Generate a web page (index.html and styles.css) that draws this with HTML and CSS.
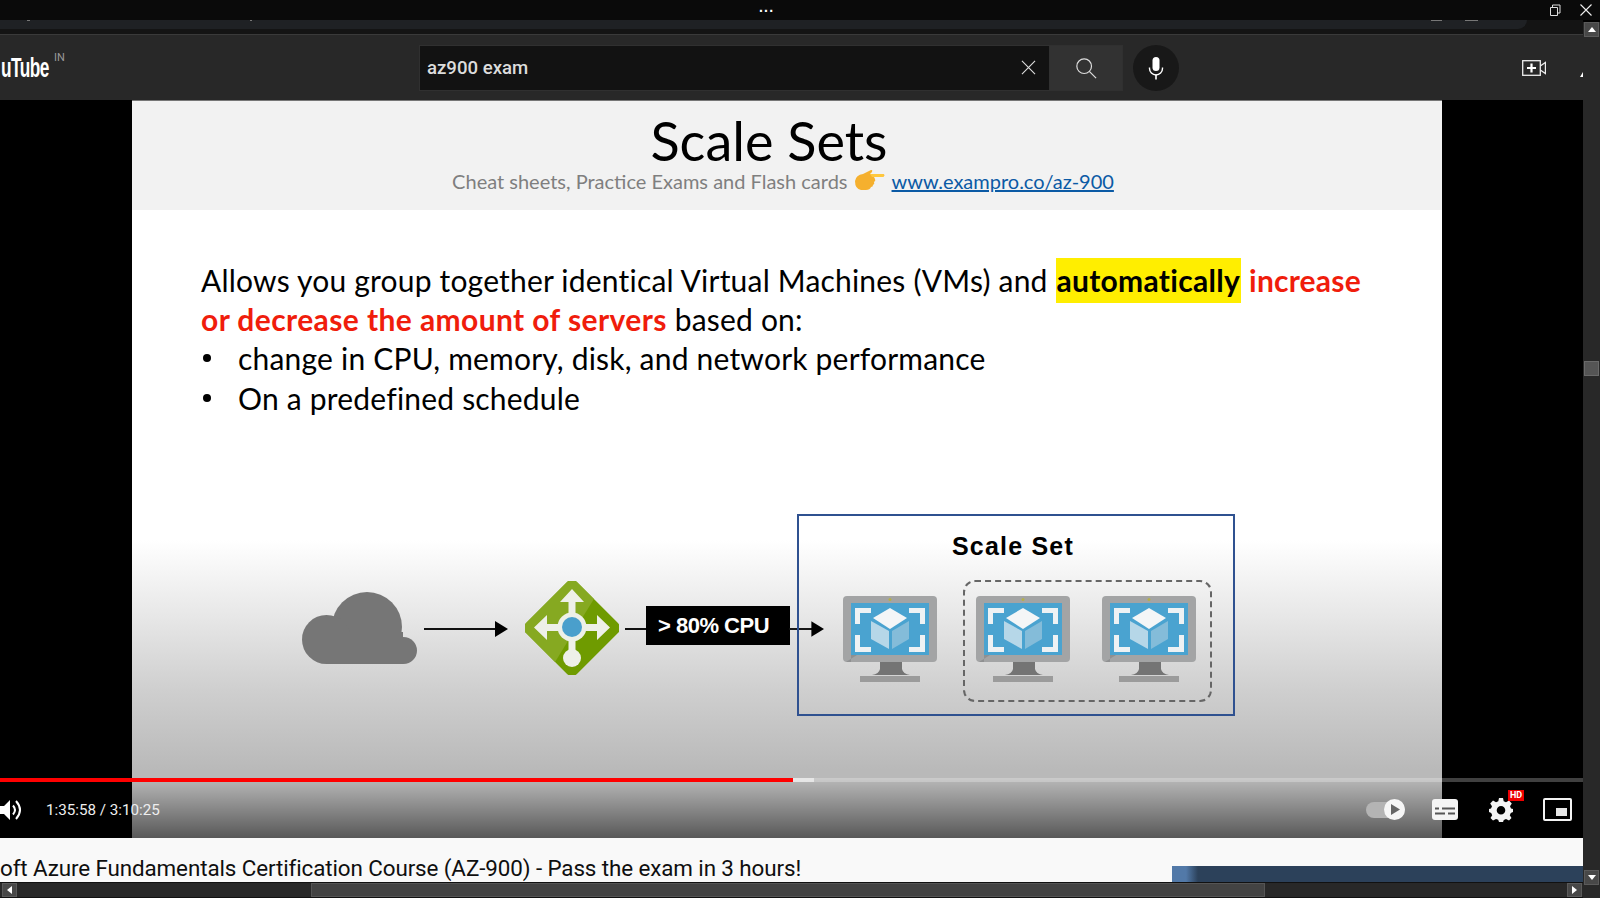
FILE: index.html
```html
<!DOCTYPE html>
<html lang="en">
<head>
<meta charset="utf-8">
<title>az900 exam - YouTube</title>
<link rel="stylesheet" href="styles.css">
</head>
<body>
<svg class="defs" width="0" height="0" aria-hidden="true">
  <defs>
    <clipPath id="lbclip"><rect x="11" y="11" width="72" height="72" rx="7" transform="rotate(45 47 47)"/></clipPath>
  </defs>
  <symbol id="vm" viewBox="0 0 94 86">
    <rect width="94" height="66" rx="4" fill="#a3a4a5"/>
    <path d="M3 66L14 59H8V66Z" fill="#8f9091"/>
    <rect x="8" y="7" width="78" height="52" fill="#4aa3d0"/>
    <path d="M37 66H59V73Q60 78 67 79H29Q36 78 37 73Z" fill="#747474"/>
    <rect x="17" y="80" width="60" height="6" fill="#9b9b9b"/>
    <path d="M12 12H28V17H17V28H12ZM82 12H66V17H77V28H82ZM12 56H28V51H17V39H12ZM82 56H66V51H77V39H82Z" fill="#eef2f4"/>
    <path d="M47 12L64 22L47 33L30 22Z" fill="#f4f6f7"/>
    <path d="M28 25L46 35V53L28 43Z" fill="#b6d7e8"/>
    <path d="M66 25L49 35V53L66 43Z" fill="#84bcd9"/>
    <circle cx="47" cy="3.5" r="1.5" fill="#b5b04c"/>
  </symbol>
</svg>

<header class="titlebar">
  <span class="dots">...</span>
  <div class="winbtns">
    <svg class="winicon" viewBox="0 0 12 12"><path d="M1.5 3.5H8.5V11.5H1.5ZM3.5 3.5V1H11V9H8.5" fill="none" stroke="#ddd"/></svg>
    <svg class="winicon" viewBox="0 0 12 12"><path d="M.5.5L11.5 11.5M11.5.5L.5 11.5" fill="none" stroke="#eee" stroke-width="1.1"/></svg>
  </div>
</header>

<div class="frame">
  <div class="column">
    <div class="tabstrip">
      <div class="tabstrip-pill">
        <i class="crumb crumb-a"></i><i class="crumb crumb-b"></i><i class="crumb crumb-c"></i><i class="crumb crumb-d"></i>
      </div>
    </div>

    <nav class="ytbar">
      <div class="logo"><span class="logo-word">uTube</span><sup class="logo-cc">IN</sup></div>
      <div class="searchwrap">
        <div class="searchbox">
          <span class="query">az900 exam</span>
          <svg class="clear" viewBox="0 0 16 16"><path d="M1 1L15 15M15 1L1 15" stroke="#ddd" stroke-width="1.2" fill="none"/></svg>
        </div>
        <div class="searchbtn">
          <svg class="mag" viewBox="0 0 24 24"><circle cx="10" cy="10" r="8" fill="none" stroke="#ddd" stroke-width="1.3"/><path d="M15.6 15.6L23 23" stroke="#ddd" stroke-width="1.3"/></svg>
        </div>
        <div class="mic">
          <svg class="micicon" viewBox="0 0 16 24"><rect x="4.5" y="1" width="7" height="14" rx="3.5" fill="#fff"/><path d="M1.5 11.5V12.5A6.5 6.5 0 0 0 14.5 12.5V11.5" fill="none" stroke="#fff" stroke-width="1.4"/><rect x="7.2" y="18.5" width="1.6" height="5" fill="#fff"/></svg>
        </div>
      </div>
      <svg class="camera" viewBox="0 0 24 16"><rect x=".7" y=".7" width="17.6" height="14.6" fill="none" stroke="#eee" stroke-width="1.3"/><path d="M9.5 3.5V12.5M5 8H14" stroke="#fff" stroke-width="2.2"/><path d="M18.3 6L23.4 2.5V13.5L18.3 10" fill="none" stroke="#eee" stroke-width="1.2"/></svg>
      <span class="bell"></span>
    </nav>

    <section class="video">
      <div class="slide">
        <div class="slide-head">
          <h1 class="slide-title">Scale Sets</h1>
          <p class="slide-sub">Cheat sheets, Practice Exams and Flash cards
            <svg class="hand" viewBox="0 0 32 22"><path d="M1 12Q2 6 9 5L17 1Q19 .5 18 3L16 5H29Q32 6 29 8H20L21 10Q22 12 20 13Q21 15 19 16Q19 18 17 18Q16 21 12 21H7Q1 20 1 12Z" fill="#f5b02e"/><path d="M16 5H29Q31 6 29 8H18Z" fill="#ffc83d"/></svg>
            <a class="slide-link">www.exampro.co/az-900</a></p>
        </div>
        <div class="slide-text">
          <p class="slide-line">Allows you group together identical Virtual Machines (VMs) and <mark class="hl">automatically</mark> <strong class="red red-first">increase</strong></p>
          <p class="slide-line"><strong class="red">or decrease the amount of servers</strong> based on:</p>
          <ul class="slide-list">
            <li class="slide-item">change in CPU, memory, disk, and network performance</li>
            <li class="slide-item">On a predefined schedule</li>
          </ul>
        </div>
        <div class="diagram">
          <svg class="cloud" viewBox="0 0 115 72"><g fill="#767676"><circle cx="65" cy="35" r="35"/><circle cx="24.500" cy="47.500" r="24.500"/><circle cx="101.500" cy="58.500" r="13.500"/><rect x="24" y="40" width="77" height="32"/></g></svg>
          <svg class="arrow arrow-a" viewBox="0 0 84 16"><path d="M0 8H72" stroke="#111" stroke-width="2"/><path d="M71 0L84 8L71 16Z" fill="#000"/></svg>
          <svg class="lb" viewBox="0 0 94 94">
            <g clip-path="url(#lbclip)">
              <rect width="94" height="94" fill="#6f9b00"/>
              <path d="M0 0H80L22 94H0Z" fill="#86a921"/>
            </g>
            <g fill="#eef0e8">
              <rect x="43.500" y="18" width="7" height="54"/>
              <rect x="20" y="43" width="54" height="7"/>
              <path d="M47 8L59 21H35ZM9 46.500L22 34V59ZM85 46.500L72 34V59Z"/>
              <circle cx="47" cy="77" r="9"/>
              <circle cx="47" cy="46" r="14.500"/>
            </g>
            <circle cx="47" cy="46" r="10" fill="#4a9fcc"/>
          </svg>
          <svg class="arrow stub" viewBox="0 0 22 4"><path d="M0 2H22" stroke="#111" stroke-width="2"/></svg>
          <div class="cpu">&gt; 80% CPU</div>
          <svg class="arrow arrow-b" viewBox="0 0 36 16"><path d="M0 8H25" stroke="#111" stroke-width="2"/><path d="M23 0L36 8L23 16Z" fill="#000"/></svg>
          <div class="scaleset"><span class="scaleset-title">Scale Set</span></div>
          <div class="dashed"></div>
          <svg class="vm vm-a"><use href="#vm"/></svg>
          <svg class="vm vm-b"><use href="#vm"/></svg>
          <svg class="vm vm-c"><use href="#vm"/></svg>
        </div>
      </div>

      <div class="controls">
        <div class="progress"><div class="played"></div><div class="buffered"></div></div>
        <div class="ctrl-row">
          <div class="ctrl-left">
            <svg class="speaker" viewBox="0 0 24 24"><path d="M0 8H4L10 2V22L4 16H0Z" fill="#fff"/><path d="M13 7.500Q17 12 13 16.500" fill="none" stroke="#fff" stroke-width="2"/><path d="M16 3Q24 12 16 21" fill="none" stroke="#fff" stroke-width="2"/></svg>
            <span class="time">1:35:58 / 3:10:25</span>
          </div>
          <div class="ctrl-right">
            <div class="toggle"><span class="toggle-knob"><svg class="toggle-play" viewBox="0 0 10 12"><path d="M0 0L10 6L0 12Z" fill="#666"/></svg></span></div>
            <svg class="cc" viewBox="0 0 26 21"><rect width="26" height="21" rx="3" fill="#f4f4f4"/><path d="M3 9.500H7M10 9.500H23M3 14.500H13M16 14.500H23" stroke="#555" stroke-width="2"/></svg>
            <div class="gearwrap">
              <svg class="gear" viewBox="0 0 24 24"><path fill-rule="evenodd" fill="#f4f4f4" d="M10 0H14L14.700 3.300L17 4.300L20 2.500L22.800 5.500L21 8.300L22 10.500L24 11V14L21.800 15L20.800 17.200L22.500 20L20 22.500L17 21L14.800 22L14 24H10L9.200 21.800L7 21L4 22.500L1.500 20L3.200 17.200L2.200 15L0 14V11L2 10.500L3 8.300L1.200 5.500L4 2.500L7 4.300L9.300 3.300ZM12 8A4.300 4.300 0 1 0 12 16.600A4.300 4.300 0 1 0 12 8Z"/></svg>
              <span class="hd">HD</span>
            </div>
            <div class="mini"><span class="mini-inner"></span></div>
          </div>
        </div>
      </div>
    </section>

    <section class="below">
      <h2 class="course-title">oft Azure Fundamentals Certification Course (AZ-900) - Pass the exam in 3 hours!</h2>
      <div class="thumb"></div>
    </section>

    <div class="hscroll">
      <span class="sbtn"><i class="tri tri-left"></i></span>
      <span class="hthumb"></span>
      <span class="sbtn sbtn-right"><i class="tri tri-right"></i></span>
    </div>
  </div>

  <aside class="vscroll">
    <span class="sbtn sbtn-v"><i class="tri tri-up"></i></span>
    <span class="vthumb"></span>
    <span class="sbtn sbtn-v sbtn-down"><i class="tri tri-down"></i></span>
  </aside>
</div>
</body>
</html>
```
FILE: styles.css
```css
* { box-sizing: border-box; }
html, body { margin: 0; padding: 0; }
body { width: 1600px; height: 914px; overflow: hidden; background: #fff; font-family: Roboto, "Liberation Sans", sans-serif; }
.defs { display: block; height: 0; }

.titlebar { height: 20px; background: #0a0a0a; display: flex; align-items: center; justify-content: flex-end; position: relative; }
.dots { position: absolute; left: 759px; top: 0; color: #fff; font: bold 14px/14px "Liberation Sans", sans-serif; letter-spacing: 1.2px; }
.winbtns { display: flex; align-items: center; gap: 19px; padding-right: 8px; }
.winicon { width: 12px; height: 12px; display: block; }

.frame { display: flex; height: 878px; }
.column { width: 1583px; display: flex; flex-direction: column; }

.tabstrip { height: 14px; background: #141414; }
.tabstrip-pill { width: 1527px; height: 9px; background: #1f2124; border-radius: 0 0 10px 0; position: relative; }
.crumb { position: absolute; top: 0; height: 1px; background: #777; }
.crumb-a { left: 27px; width: 3px; }
.crumb-b { left: 250px; width: 2px; }
.crumb-c { left: 1431px; width: 11px; }
.crumb-d { left: 1465px; width: 13px; }

.ytbar { height: 66px; background: #282828; border-top: 1px solid #3a3a3a; display: flex; align-items: center; position: relative; }
.logo { width: 419px; flex: none; display: flex; align-items: flex-start; color: #fff; }
.logo-word { font: bold 27px/28px "Liberation Sans", sans-serif; letter-spacing: -.9px; transform: scaleX(.64); transform-origin: left center; width: 53px; white-space: nowrap; margin-left: 1px; }
.logo-cc { font: 11px/12px Roboto, sans-serif; color: #9a9a9a; margin: 0; position: relative; top: -2px; }
.searchwrap { display: flex; align-items: center; }
.searchbox { width: 630px; height: 46px; background: #121212; border: 1px solid #303030; border-right: 0; display: flex; align-items: center; justify-content: space-between; padding: 0 13px 0 7px; }
.query { color: #dcdcdc; font: 500 18.600px/24px Roboto, sans-serif; }
.clear { width: 15px; height: 15px; }
.searchbtn { width: 74px; height: 46px; background: #323232; border: 1px solid #303030; display: flex; align-items: center; justify-content: center; }
.mag { width: 22px; height: 22px; }
.mic { width: 46px; height: 46px; margin-left: 10px; border-radius: 50%; background: #181818; display: flex; align-items: center; justify-content: center; }
.micicon { width: 16px; height: 24px; }
.camera { width: 24px; height: 16px; margin-left: 343px; }
.bell { position: absolute; left: 1580px; top: 37px; width: 0; height: 0; border-left: 3px solid transparent; border-bottom: 5px solid #fff; }

.video { height: 738px; background: #000; position: relative; padding-left: 132px; flex: none; }
.slide { width: 1310px; height: 738px; display: flex; flex-direction: column;
  background: linear-gradient(#fff 0, #fff 440px, #e6e6e6 520px, #cfcfcf 590px, #b9b9b9 670px, #b9b9b9 100%); }
.slide-head { height: 110px; flex: none; background: #f2f2f2; display: flex; flex-direction: column; align-items: center; border-top: 1px solid #777; }
.slide-title { margin: 11px 36px 0 0; font: 400 54px/58px Lato, sans-serif; color: #000; }
.slide-sub { margin: -3px 8px 0 0; color: #7f7f7f; font: 20px/28px Lato, sans-serif; display: flex; align-items: center; gap: 6px; }
.hand { width: 32px; height: 22px; margin-bottom: 3px; }
.slide-link { color: #0b5aa5; text-decoration: underline; }
.slide-text { padding: 51px 0 0 69px; color: #000; font: 30px/39.200px Lato, sans-serif; letter-spacing: .2px; height: 290px; flex: none; }
.slide-line { margin: 0; white-space: nowrap; }
.hl { background: #ffee00; color: #000; font-weight: 700; padding: 4px 1px 5px; letter-spacing: .3px; }
.red { color: #f01d0c; font-weight: 700; letter-spacing: .4px; }
.red-first { letter-spacing: .2px; }
.slide-list { margin: 0; padding: 0 0 0 37px; list-style: none; }
.slide-item { position: relative; white-space: nowrap; }
.slide-item::before { content: ""; position: absolute; left: -35px; top: 15px; width: 8px; height: 8px; background: #000; border-radius: 50%; }

.diagram { position: relative; flex: 1; }
.diagram > svg { position: absolute; display: block; }
.cloud { left: 170px; top: 92px; width: 115px; height: 72px; }
.arrow-a { left: 292px; top: 121px; width: 84px; height: 16px; }
.lb { left: 393px; top: 81px; width: 94px; height: 94px; }
.stub { left: 493px; top: 127px; width: 22px; height: 4px; }
.cpu { position: absolute; left: 514px; top: 106px; width: 144px; height: 39px; background: #000; color: #fff; font: 700 22px/40px "Liberation Sans", sans-serif; padding-left: 12px; letter-spacing: -.5px; white-space: nowrap; }
.arrow-b { left: 657px; top: 121px; width: 35px; height: 16px; }
.scaleset { position: absolute; left: 665px; top: 14px; width: 438px; height: 202px; border: 2px solid #2f5190; text-align: center; }
.scaleset-title { display: block; margin: 15px 6px 0 0; font: 700 25px/30px "Liberation Sans", sans-serif; letter-spacing: 1.2px; color: #000; }
.dashed { position: absolute; left: 831px; top: 80px; width: 249px; height: 122px; border: 2px dashed #666; border-radius: 12px; }
.vm { width: 94px; height: 86px; top: 96px; }
.vm-a { left: 711px; }
.vm-b { left: 844px; }
.vm-c { left: 970px; }

.controls { position: absolute; left: 0; right: 0; bottom: 0; height: 60px; background: linear-gradient(rgba(0,0,0,0), rgba(0,0,0,.52)); }
.progress { height: 4px; background: rgba(255,255,255,.25); display: flex; }
.played { width: 793px; background: #f00; }
.buffered { width: 21px; background: rgba(255,255,255,.55); }
.ctrl-row { display: flex; justify-content: space-between; align-items: center; height: 51px; margin-top: 2px; }
.ctrl-left { display: flex; align-items: center; }
.speaker { width: 24px; height: 24px; display: block; }
.time { margin-left: 22px; color: #eee; font: 15.200px/20px Roboto, sans-serif; }
.ctrl-right { display: flex; align-items: center; padding-right: 11px; }
.toggle { width: 39px; height: 16px; background: #b4b4b4; border-radius: 8px; position: relative; margin-right: 27px; }
.toggle-knob { position: absolute; right: 0; top: -2.500px; width: 21px; height: 21px; border-radius: 50%; background: #f6f6f6; display: flex; align-items: center; justify-content: center; }
.toggle-play { width: 9px; height: 11px; margin-left: 2px; }
.cc { width: 26px; height: 21px; margin-right: 31px; }
.gearwrap { position: relative; width: 24px; height: 24px; margin-right: 30px; }
.gear { width: 24px; height: 24px; display: block; }
.hd { position: absolute; left: 19px; top: -8px; width: 16px; height: 11px; background: #e00; color: #fff; font: 700 9px/11px Roboto, sans-serif; text-align: center; }
.mini { width: 29px; height: 23px; border: 2px solid #f4f4f4; border-radius: 2px; position: relative; }
.mini-inner { position: absolute; right: 3px; bottom: 3px; width: 11px; height: 8px; background: #e8e8e8; }

.below { height: 44px; flex: none; background: #f9f9f9; display: flex; overflow: hidden; position: relative; }
.course-title { margin: 16px 0 0; font: 400 22.400px/28px Roboto, sans-serif; color: #0f0f0f; white-space: nowrap; letter-spacing: -.1px; }
.thumb { position: absolute; left: 1172px; right: 0; top: 28px; height: 16px; background: linear-gradient(90deg, #5279a8, #5279a8 14px, #2c415a 26px); }

.hscroll { height: 16px; flex: none; background: #282828; border-top: 1px solid #111; border-bottom: 1px solid #111; display: flex; align-items: center; padding: 0 2px; position: relative; }
.sbtn { width: 15px; height: 14px; background: #484848; border: 1px solid #5a5a5a; display: flex; align-items: center; justify-content: center; flex: none; }
.sbtn-right { position: absolute; left: 1567px; top: 0; }
.hthumb { width: 954px; height: 14px; margin-left: 294px; background: #434343; border: 1px solid #555; }
.tri { width: 0; height: 0; display: block; border: 4px solid transparent; }
.tri-left { border-right: 5px solid #fff; border-left-width: 0; }
.tri-right { border-left: 5px solid #fff; border-right-width: 0; }
.tri-up { border-bottom: 5px solid #fff; border-top-width: 0; }
.tri-down { border-top: 5px solid #fff; border-bottom-width: 0; }

.vscroll { width: 17px; height: 878px; background: linear-gradient(#000 0, #000 2px, #282828 2px); padding: 2px 1px 0; display: flex; flex-direction: column; align-items: center; }
.sbtn-v { width: 15px; height: 15px; }
.vthumb { width: 15px; height: 15px; margin-top: 324px; background: #555; border: 1px solid #6a6a6a; }
.sbtn-down { margin-top: 494px; }
```
